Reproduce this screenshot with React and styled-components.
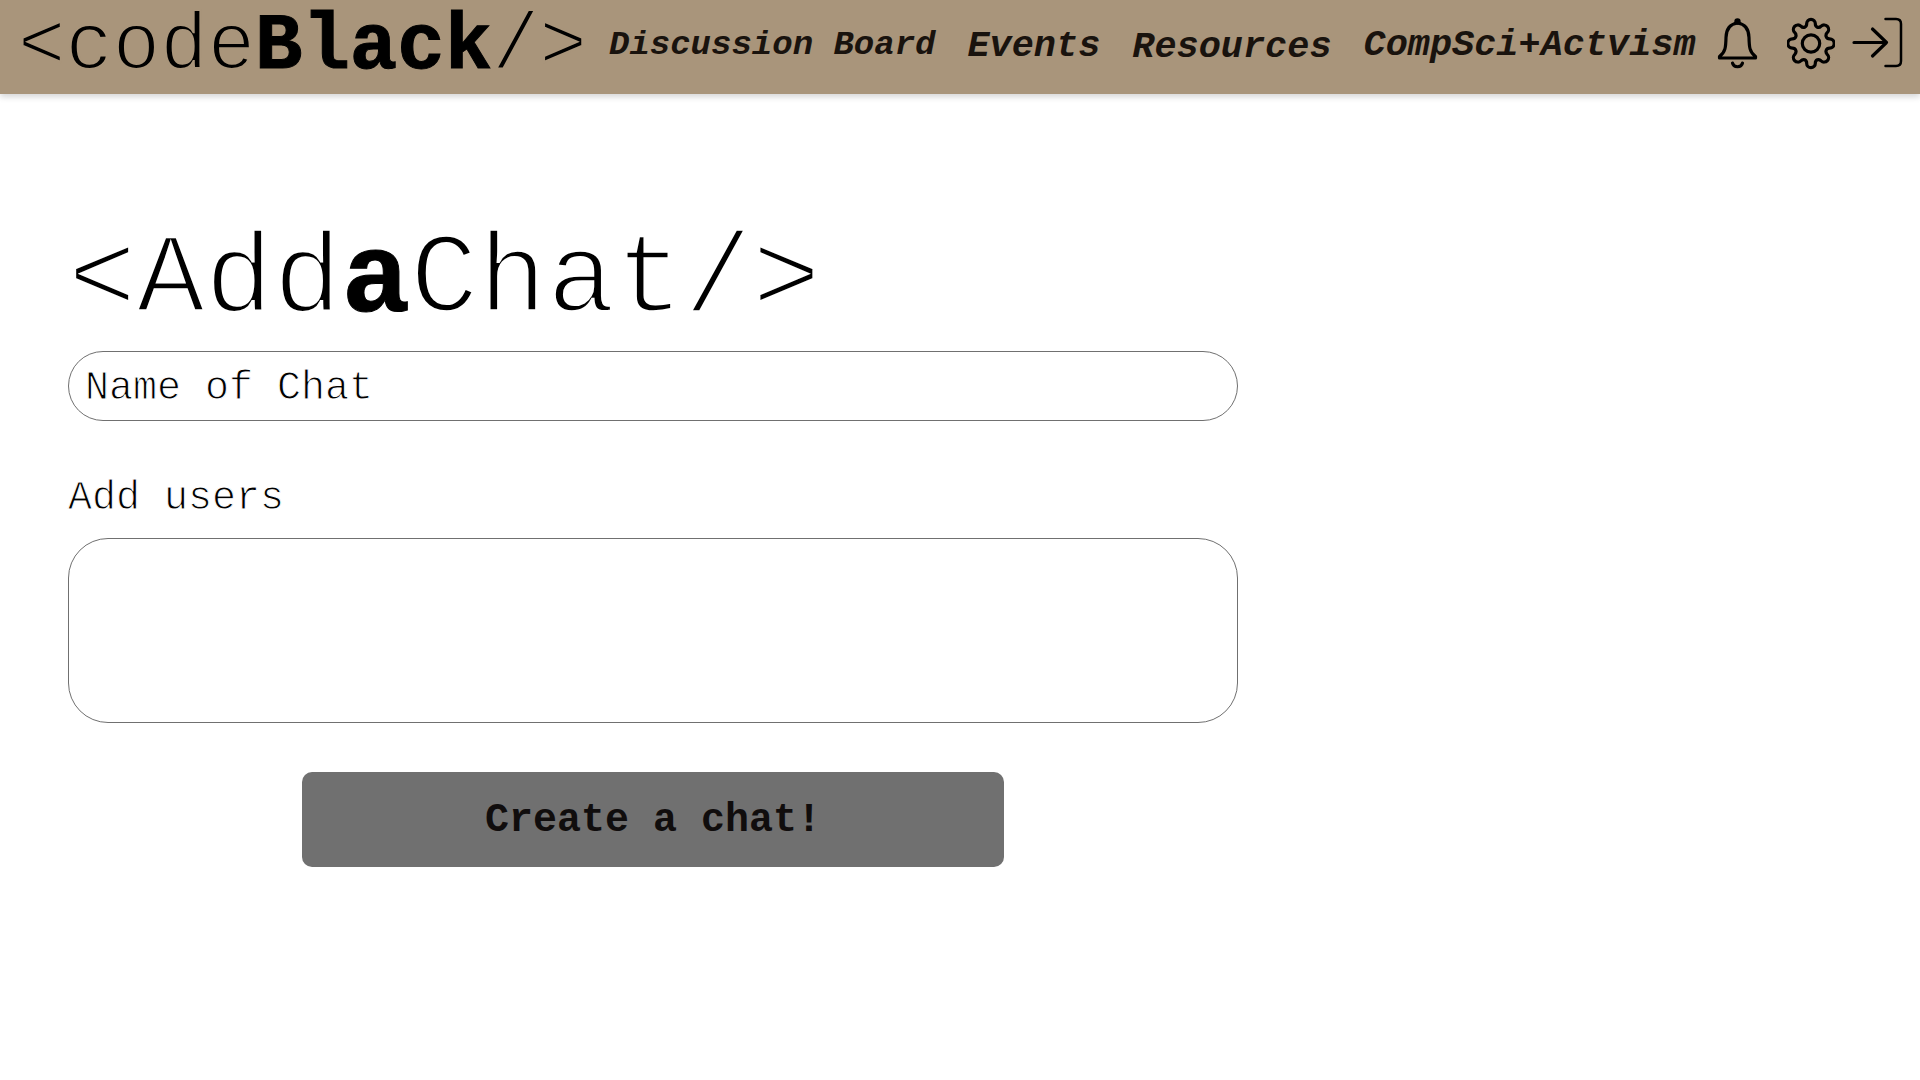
import React from 'react';
import styled, { createGlobalStyle } from 'styled-components';

const GlobalStyle = createGlobalStyle`
    body {
        margin: 0;
        background-color: #fff;
        font-family: 'Courier New', 'Liberation Mono', monospace;
        color: #000;
    }
    * {
        box-sizing: border-box;
    }
`

const Header = styled.header`
    display: flex;
    align-items: flex-start;
    height: 94px;
    padding-left: 18px;
    background-color: #a9957b;
    box-shadow: 0 3px 6px rgba(0, 0, 0, 0.16);
`

const Logo = styled.div`
    width: 591px;
    padding-top: 8px;
    font-size: 79px;
    line-height: 1;
    white-space: nowrap;
    -webkit-text-stroke: 2.2px #a9957b;
`

const Strong = styled.b`
    font-weight: bold;
    -webkit-text-stroke: 1px #000;
`

const Nav = styled.nav`
    display: flex;
    align-items: flex-start;
    gap: 32px;
`

const NavLink = styled.a`
    padding-top: ${(props) => props.$top}px;
    font-size: ${(props) => props.$size || 36.9}px;
    font-weight: bold;
    font-style: italic;
    line-height: 1;
    white-space: nowrap;
    color: #19130e;
`

const Icons = styled.div`
    display: flex;
    align-items: flex-start;
    padding: 17px 0 0 21px;
    gap: 29px;
    svg {
        display: block;
        flex-shrink: 0;
        fill: none;
        stroke: #000;
        stroke-width: 3.2;
        stroke-linecap: round;
        stroke-linejoin: round;
    }
    svg:last-child {
        margin-left: -13px;
    }
`

const Main = styled.main`
    display: flex;
    flex-direction: column;
    width: 1238px;
    padding: 130px 0 0 68px;
`

const Title = styled.h1`
    margin: 0 0 13px;
    font-size: 114px;
    font-weight: normal;
    line-height: 1;
    white-space: nowrap;
    -webkit-text-stroke: 3.4px #fff;
`

const NameInput = styled.input`
    height: 70px;
    padding: 4px 16px 0;
    border: 1px solid #707070;
    border-radius: 35px;
    background-color: transparent;
    font-family: inherit;
    font-size: 40px;
    outline: none;
    -webkit-text-stroke: 1px #fff;
    &::placeholder {
        color: #000;
        opacity: 1;
    }
`

const Label = styled.label`
    margin: 58px 0 19px;
    font-size: 40px;
    line-height: 1;
    -webkit-text-stroke: 1px #fff;
`

const UsersInput = styled.textarea`
    height: 185px;
    padding: 20px;
    border: 1px solid #707070;
    border-radius: 40px;
    background-color: transparent;
    font-family: inherit;
    font-size: 40px;
    resize: none;
    outline: none;
`

const CreateButton = styled.button`
    align-self: center;
    width: 702px;
    height: 95px;
    margin-top: 49px;
    padding: 2px 0 0;
    border: none;
    border-radius: 10px;
    background-color: #707070;
    font-family: inherit;
    font-size: 40px;
    font-weight: bold;
    color: #100d0d;
`

// eight rounded teeth joined by shallow valleys
const gearPath = () => {
    const cap = 18.6;
    const r = 4.3;
    const k = 3.4;
    const pt = (a, along, side) => {
        const x = 24 + along * Math.cos(a) - side * Math.sin(a);
        const y = 26 + (along * Math.sin(a) + side * Math.cos(a)) * 1.07;
        return `${x.toFixed(2)} ${y.toFixed(2)}`;
    };
    let d = `M${pt(0, cap, -r)}`;
    for (let i = 0; i < 8; i++) {
        const a = (i * Math.PI) / 4;
        const b = a + Math.PI / 4;
        d += `A${r} ${r} 0 0 1 ${pt(a, cap, r)}`;
        d += `C${pt(a, cap - k, r)} ${pt(b, cap - k, -r)} ${pt(b, cap, -r)}`;
    }
    return d + 'Z';
};

const BellIcon = () => (
    <svg width="41" height="53" viewBox="0 0 41 53">
        <circle cx="20.5" cy="4.5" r="1.6" fill="#000" />
        <path d="M20.5 6C13 7 9.2 12.5 9 20.5C8.8 30 8.5 35 2.5 39.5V41H38.5V39.5C32.5 35 32.200 30 32 20.5C31.8 12.5 28 7 20.5 6Z" />
        <path d="M15.5 46C16.5 51 24.5 51 25.5 46" />
    </svg>
);

const GearIcon = () => (
    <svg width="48" height="54" viewBox="0 -0.5 48 54">
        <path d={gearPath()} />
        <circle cx="24" cy="26" r="8.7" />
    </svg>
);

const LogoutIcon = () => (
    <svg width="52" height="54" viewBox="0 0 52 54">
        <path d="M3 25.5H35.5M21.5 12L35.5 25.5L21.5 39" />
        <path d="M34.5 2H45Q50 2 50 7V44Q50 49 45 49H34.5" strokeWidth="2.5" />
    </svg>
);

const AddChatPage = () => {
    return (
        <>
            <GlobalStyle />
            <Header>
                <Logo>&lt;code<Strong>Black</Strong>/&gt;</Logo>
                <Nav>
                    <NavLink $top={28} $size={34}>Discussion Board</NavLink>
                    <NavLink $top={28}>Events</NavLink>
                    <NavLink $top={29}>Resources</NavLink>
                    <NavLink $top={27}>CompSci+Actvism</NavLink>
                </Nav>
                <Icons>
                    <BellIcon />
                    <GearIcon />
                    <LogoutIcon />
                </Icons>
            </Header>
            <Main>
                <Title>&lt;Add<Strong>a</Strong>Chat/&gt;</Title>
                <NameInput placeholder="Name of Chat" />
                <Label htmlFor="users">Add users</Label>
                <UsersInput id="users" />
                <CreateButton>Create a chat!</CreateButton>
            </Main>
        </>
    );
}

export default AddChatPage;
